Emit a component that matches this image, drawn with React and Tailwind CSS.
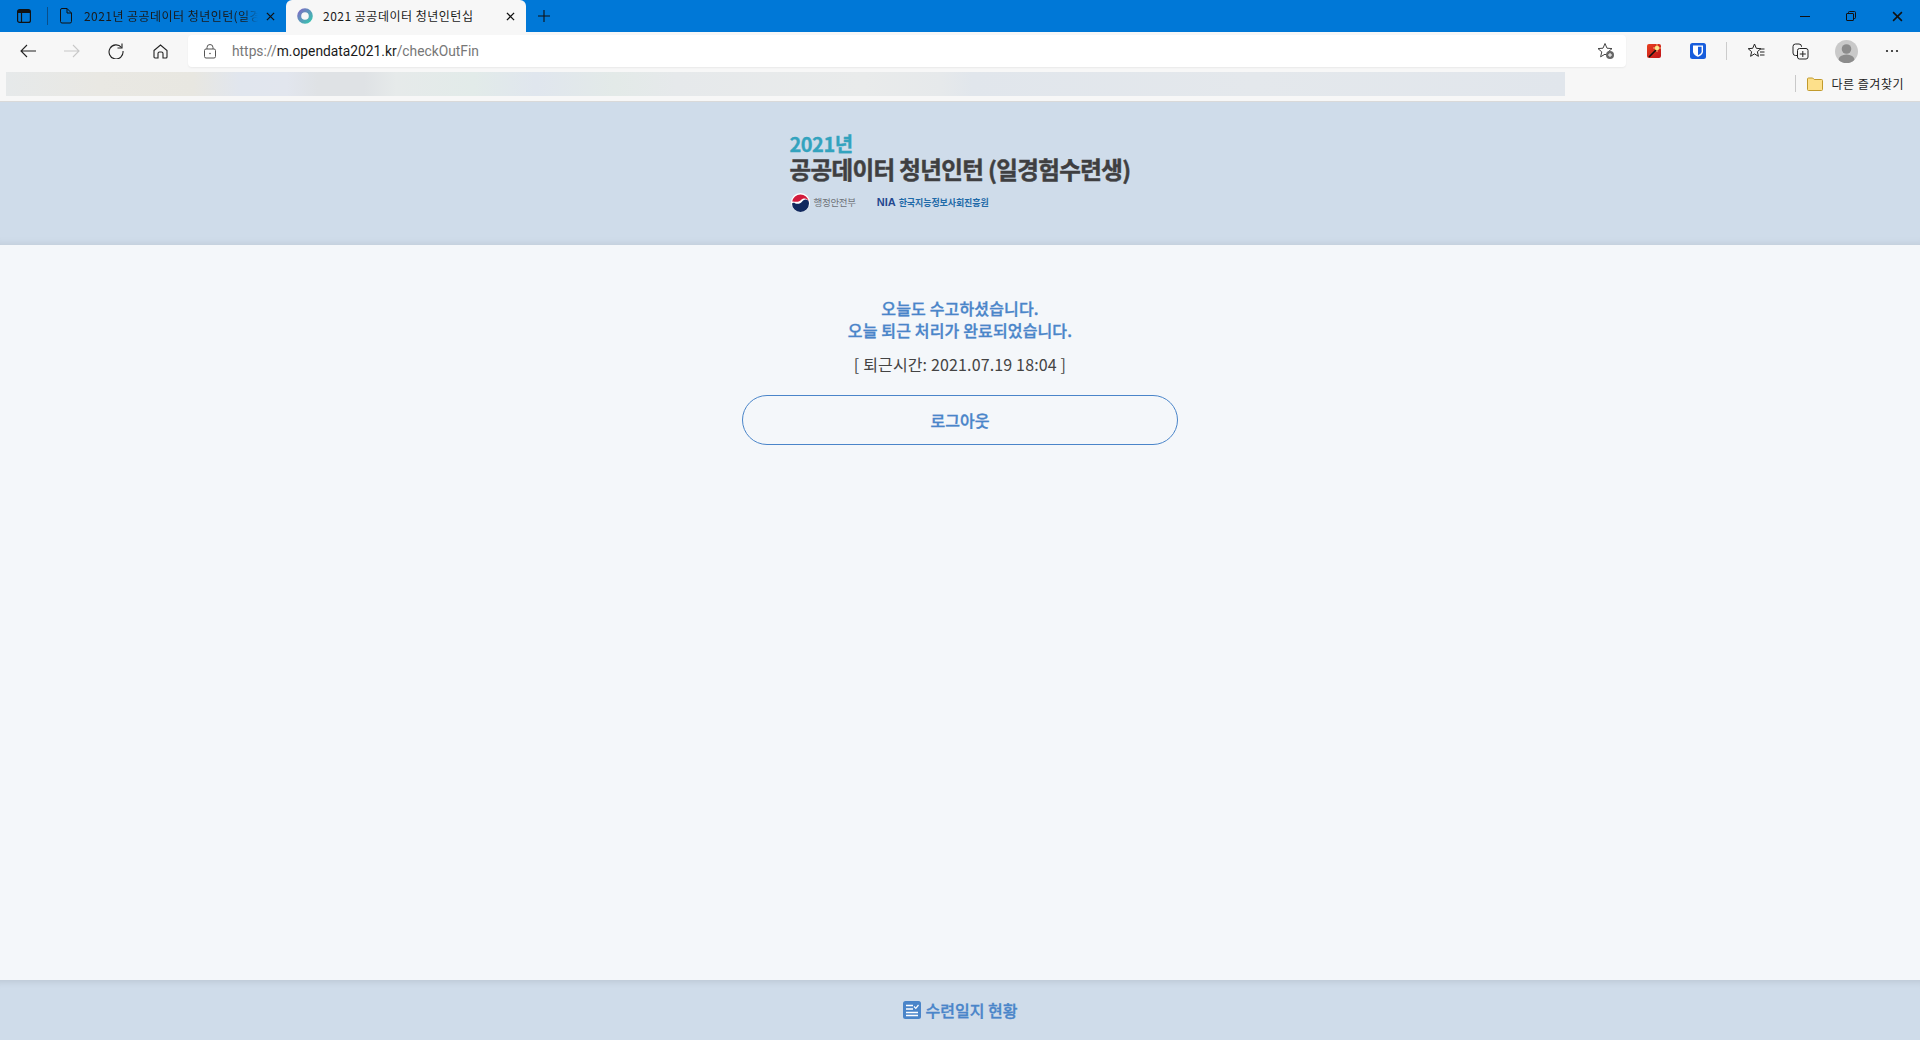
import React from "react";

const kr = "font-['Noto_Sans_CJK_KR','Noto_Sans',sans-serif]";
const ui = "font-['Noto_Sans_CJK_KR','Noto_Sans',sans-serif]";

function X({ size = 10, color = "#111" }) {
  return (
    <svg width={size} height={size} viewBox="0 0 10 10" fill="none" stroke={color} strokeWidth="1.4">
      <path d="M1 1l8 8M9 1l-8 8" />
    </svg>
  );
}

function Tabs() {
  return (
    <div className="flex h-8 bg-[#0078d7] items-stretch">
      <div className="w-12 flex items-center justify-center relative shrink-0">
        <svg width="14" height="14" viewBox="0 0 14 14" fill="none" stroke="#111" strokeWidth="1.2">
          <rect x="0.600" y="0.600" width="12.800" height="12.800" rx="2" />
          <path d="M4.500 4v9.400" />
          <rect x="1" y="1" width="12" height="3" fill="#111" stroke="none" />
        </svg>
        <div className="absolute right-0 top-[7px] h-[18px] w-px bg-[#0a4f8a]" />
      </div>
      <div className="w-[238px] flex items-center pl-[12px] pr-[11px] shrink-0">
        <svg width="12" height="16" viewBox="0 0 12 16" fill="none" stroke="#111" strokeWidth="1" className="shrink-0">
          <path d="M.5 2A1.500 1.500 0 0 1 2 .5h5L11.500 5v8.500A1.500 1.500 0 0 1 10 15H2a1.500 1.500 0 0 1-1.500-1.500z" />
          <path d="M7 .5V5h4.500" />
        </svg>
        <span className={`ml-[12px] w-[174px] overflow-hidden whitespace-nowrap text-[12px] leading-[16px] tracking-[0.45px] text-[#1a1a1a] [mask-image:linear-gradient(90deg,#000_92%,transparent)] ${ui}`}>
          2021년 공공데이터 청년인턴(일경
        </span>
        <span className="ml-auto"><X size={9} /></span>
      </div>
      <div className="w-[240px] bg-[#f7f7f7] rounded-t-[6px] flex items-center pl-[11px] pr-[11px] shrink-0">
        <svg width="16" height="16" viewBox="0 0 16 16" fill="none" className="shrink-0">
          <defs>
            <linearGradient id="g1" x1="0" y1="0" x2="1" y2="1">
              <stop offset="0" stopColor="#7b6fc4" />
              <stop offset="1" stopColor="#39c2b0" />
            </linearGradient>
          </defs>
          <circle cx="8" cy="8" r="5.800" stroke="url(#g1)" strokeWidth="4" />
        </svg>
        <span className={`ml-[10px] text-[12px] leading-[16px] tracking-[0.5px] text-[#1a1a1a] whitespace-nowrap ${ui}`}>2021 공공데이터 청년인턴십</span>
        <span className="ml-auto"><X size={9} /></span>
      </div>
      <div className="w-9 flex items-center justify-center">
        <svg width="14" height="14" viewBox="0 0 14 14" stroke="#111" strokeWidth="1.100">
          <path d="M7 1v12M1 7h12" />
        </svg>
      </div>
      <div className="flex-1" />
      <div className="flex items-center text-[#111]">
        <div className="w-[46px] flex justify-center">
          <svg width="10" height="10" viewBox="0 0 10 10" stroke="#111"><path d="M0 5.500h10" /></svg>
        </div>
        <div className="w-[46px] flex justify-center">
          <svg width="10" height="10" viewBox="0 0 10 10" fill="none" stroke="#111">
            <rect x="0.500" y="2.500" width="7" height="7" rx="0.500" />
            <path d="M2.500 2.500v-1a1 1 0 0 1 1-1h5a1 1 0 0 1 1 1v5a1 1 0 0 1-1 1h-1" />
          </svg>
        </div>
        <div className="w-[46px] flex justify-center">
          <X size={11} color="#111" />
        </div>
      </div>
    </div>
  );
}

function Toolbar() {
  return (
    <div className="flex h-[38px] bg-[#f7f7f7] items-center">
      <div className="w-[45px] flex justify-center ml-[5px]">
        <svg width="16" height="14" viewBox="0 0 16 14" fill="none" stroke="#222" strokeWidth="1.100">
          <path d="M16 7H1M7 1L1 7l6 6" />
        </svg>
      </div>
      <div className="w-[44px] flex justify-center">
        <svg width="16" height="14" viewBox="0 0 16 14" fill="none" stroke="#c8c8c8" strokeWidth="1.100">
          <path d="M0 7h15M9 1l6 6-6 6" />
        </svg>
      </div>
      <div className="w-[44px] flex justify-center">
        <svg width="16" height="16" viewBox="0 0 16 16" fill="none" stroke="#222" strokeWidth="1.100">
          <path d="M13.500 4.500A7 7 0 1 0 15 8" />
          <path d="M14 0.500v4.500h-4.500" />
        </svg>
      </div>
      <div className="w-[44px] flex justify-center">
        <svg width="15" height="15" viewBox="0 0 15 15" fill="none" stroke="#222" strokeWidth="1.100">
          <path d="M1 6.500L7.500 1 14 6.500v6.500a1 1 0 0 1-1 1h-3V9.500a1.500 1.500 0 0 0-1.500-1.500h-2A1.500 1.500 0 0 0 5 9.500V14H2a1 1 0 0 1-1-1z" />
        </svg>
      </div>
      <div className="ml-[6px] w-[1438px] h-[32px] bg-white rounded-[4px] flex items-center shadow-[0_1px_2px_rgba(0,0,0,0.06)]">
        <svg width="12" height="15" viewBox="0 0 12 15" fill="none" stroke="#555" className="ml-[16px] shrink-0">
          <rect x="0.500" y="5" width="11" height="9" rx="1.500" />
          <path d="M3 5V3.500a3 3 0 0 1 6 0V5" />
          <circle cx="6" cy="9.500" r="0.800" fill="#555" stroke="none" />
        </svg>
        <span className="ml-[16px] text-[13.8px] font-['Roboto',sans-serif] text-[#777] whitespace-nowrap">
          https://<span className="text-[#1a1a1a]">m.opendata2021.kr</span>/checkOutFin
        </span>
        <div className="ml-auto mr-[11px] relative w-[18px] h-[18px]">
          <svg width="18" height="18" viewBox="0 0 18 18" fill="none" stroke="#444" strokeWidth="1">
            <path d="M8 1.500l2 4.700 5 .4-3.800 3.300 1.200 4.900L8 12.200l-4.400 2.600 1.200-4.900L1 6.600l5-.4z" />
            <circle cx="13" cy="13" r="4" fill="#666" stroke="none" />
            <path d="M13 11v4M11 13h4" stroke="#fff" />
          </svg>
        </div>
      </div>
      <div className="w-[44px] ml-[6px] flex justify-center">
        <div className="w-[14px] h-[14px] rounded-[2px] bg-[linear-gradient(135deg,#e8401f,#c0141a)] relative overflow-hidden">
          <svg width="14" height="14" viewBox="0 0 14 14" className="absolute inset-0">
            <path d="M2 13l7-7" stroke="#111" strokeWidth="1.600" />
            <circle cx="10" cy="4" r="2.300" fill="#f9e27a" />
            <path d="M10 0v8M6 4h8" stroke="#fbe9a0" strokeWidth="0.700" />
          </svg>
        </div>
      </div>
      <div className="w-[44px] flex justify-center">
        <svg width="16" height="16" viewBox="0 0 16 16">
          <rect width="16" height="16" rx="2.500" fill="#175ddc" />
          <path d="M3 2.500h10v6c0 2.800-2.800 4.300-5 5.300-2.200-1-5-2.500-5-5.300z" fill="#fff" />
          <path d="M8 3.800h3.600v4.700c0 1.700-2 3-3.600 3.800z" fill="#175ddc" />
        </svg>
      </div>
      <div className="w-px h-[18px] bg-[#ccc] ml-[6px]" />
      <div className="w-[50px] flex justify-center ml-[4px]">
        <svg width="17" height="16" viewBox="0 0 17 16" fill="none" stroke="#222" strokeWidth="1">
          <path d="M6.500 1l1.800 4.300 4.500.4-3.400 3 1 4.600-3.900-2.400-3.900 2.400 1-4.600L.2 5.700l4.500-.4z" />
          <path d="M12 6h4.500M12 9h4.500M12 12h4.500" />
        </svg>
      </div>
      <div className="w-[38px] flex justify-center">
        <svg width="17" height="17" viewBox="0 0 17 17" fill="none" stroke="#222" strokeWidth="1">
          <path d="M5 12.500H3.500A2.500 2.500 0 0 1 1 10V3.500A2.500 2.500 0 0 1 3.500 1H7a2.500 2.500 0 0 1 2.500 2.500V4" />
          <rect x="5.500" y="5.500" width="10.500" height="10.500" rx="2" fill="#f7f7f7" />
          <path d="M10.800 8v6M7.800 11h6" />
        </svg>
      </div>
      <div className="w-[54px] flex justify-center">
        <div className="w-[23px] h-[23px] rounded-full bg-[#c9c9c9] overflow-hidden">
          <svg width="23" height="23" viewBox="0 0 23 23" fill="#8c8c8c">
            <circle cx="11.500" cy="9" r="4.800" />
            <ellipse cx="11.500" cy="20" rx="8" ry="5.500" />
          </svg>
        </div>
      </div>
      <div className="w-[38px] flex justify-center">
        <svg width="14" height="4" viewBox="0 0 14 4" fill="#222">
          <circle cx="2" cy="2" r="1.100" />
          <circle cx="7" cy="2" r="1.100" />
          <circle cx="12" cy="2" r="1.100" />
        </svg>
      </div>
    </div>
  );
}

function Favorites() {
  return (
    <div className="flex h-[32px] bg-[#f7f7f7] items-center border-b border-[#d9d9d9] pb-[4px]">
      <div className="ml-[6px] w-[1559px] h-6 bg-[linear-gradient(90deg,#e6e9ea_0%,#e9e8e3_6%,#e8e7e1_12%,#e1e6ee_15%,#e2e6ee_18%,#dfe2e5_20%,#dfe2e5_23%,#e6eaea_25%,#e2ebe9_30%,#e0e6ee_34%,#e3eae8_39%,#e6e9eb_43%,#e9ebeb_55%,#e6e9eb_60%,#e1e6ec_62%,#e4e8ec_80%,#e1e6ec_100%)]" />
      <div className="ml-auto flex items-center mr-[16px]">
        <div className="w-px h-[17px] bg-[#c9c9c9] mr-[11px]" />
        <svg width="16" height="14" viewBox="0 0 16 14" className="mr-[9px]">
          <path d="M.5 2a1 1 0 0 1 1-1h4.200l1.500 1.500h7.300a1 1 0 0 1 1 1V12.500a1 1 0 0 1-1 1h-13a1 1 0 0 1-1-1z" fill="#fde08b" stroke="#c19a2c" />
        </svg>
        <span className={`text-[12px] leading-none tracking-[0.5px] text-[#222] whitespace-nowrap ${ui}`}>다른 즐겨찾기</span>
      </div>
    </div>
  );
}

function Logo() {
  return (
    <div className="w-[342px] flex flex-col items-start">
      <div className={`text-[20px] leading-[23px] font-bold tracking-[-0.5px] text-[#33a3be] [-webkit-text-stroke:0.3px_#33a3be] ${kr}`}>2021년</div>
      <div className={`text-[23.5px] leading-[28px] font-bold tracking-[-0.62px] text-[#3f3f41] [-webkit-text-stroke:0.5px_#3f3f41] whitespace-nowrap ${kr}`}>공공데이터 청년인턴 (일경험수련생)</div>
      <div className="flex items-center mt-[10px] ml-[1px]">
        <svg width="19" height="19" viewBox="0 0 19 19">
          <circle cx="9.500" cy="9.500" r="9.500" fill="#fff" />
          <path d="M1.200 8.500a8.400 8.400 0 0 1 16.600 0C16.800 5.800 14 4.800 11.800 5.800 10 6.600 9 8.600 6.800 8.800 4.600 9 2.800 8.400 1.200 8.500z" fill="#d21b3c" />
          <path d="M1 10.500a8.500 8.500 0 0 0 17 0c.3-2.600-2-4.300-4.300-3.800-2 .4-2.700 2.400-4.200 3.300-2 1.200-4.500 1-5.500.2C3.300 9.800 1.800 9.600 1 10.500z" fill="#11295f" />
        </svg>
        <span className={`ml-[4px] text-[9.500px] leading-none text-[#6e7278] tracking-[-0.3px] whitespace-nowrap ${kr}`}>행정안전부</span>
        <span className="ml-[21px] text-[11px] leading-none font-bold text-[#24478f] font-['Liberation_Sans',sans-serif]">NIA</span>
        <span className={`ml-[3px] text-[9px] leading-none font-bold text-[#1f6aa8] tracking-[-0.1px] whitespace-nowrap ${kr}`}>한국지능정보사회진흥원</span>
      </div>
    </div>
  );
}

const blueText = "text-[#4a85c9] [-webkit-text-stroke:0.35px_#4a85c9]";

export default function App() {
  return (
    <div className={`h-[1040px] w-full overflow-hidden flex flex-col bg-[#f4f7fa] ${kr}`}>
      <Tabs />
      <Toolbar />
      <Favorites />
      <header className="h-[143px] bg-[#cfdcea] shadow-[inset_0_-8px_8px_-8px_rgba(0,0,0,0.1)] flex items-center justify-center shrink-0 pl-[1px] pb-[3px]">
        <Logo />
      </header>
      <main className="flex-1 flex flex-col items-center pt-[52px]">
        <p className={`text-[16px] leading-[22px] tracking-[0.15px] font-medium text-center ${blueText}`}>
          오늘도 수고하셨습니다.<br />오늘 퇴근 처리가 완료되었습니다.
        </p>
        <p className="mt-[12px] text-[16px] leading-[23px] tracking-[0.15px] text-[#444] text-center">[ 퇴근시간: 2021.07.19 18:04 ]</p>
        <button className={`mt-[19px] w-[436px] h-[50px] rounded-[25px] border border-[#4a85c9] text-[16px] font-medium ${blueText}`}>로그아웃</button>
      </main>
      <footer className="h-[60px] bg-[#cfdcea] shadow-[inset_0_8px_8px_-8px_rgba(0,0,0,0.14)] flex items-center justify-center shrink-0 gap-[5px] pb-[1px]">
        <svg width="18" height="18" viewBox="0 0 18 18">
          <rect width="18" height="18" rx="2.500" fill="#4a85c9" />
          <path d="M3 4.500h7M3 8h7M3 11.500h12M3 14.500h12" stroke="#fff" strokeWidth="1.300" />
          <path d="M11 5.500l1.800 1.800L15.500 4" stroke="#fff" strokeWidth="1.200" fill="none" />
        </svg>
        <span className={`text-[16px] font-medium ${blueText}`}>수련일지 현황</span>
      </footer>
    </div>
  );
}
